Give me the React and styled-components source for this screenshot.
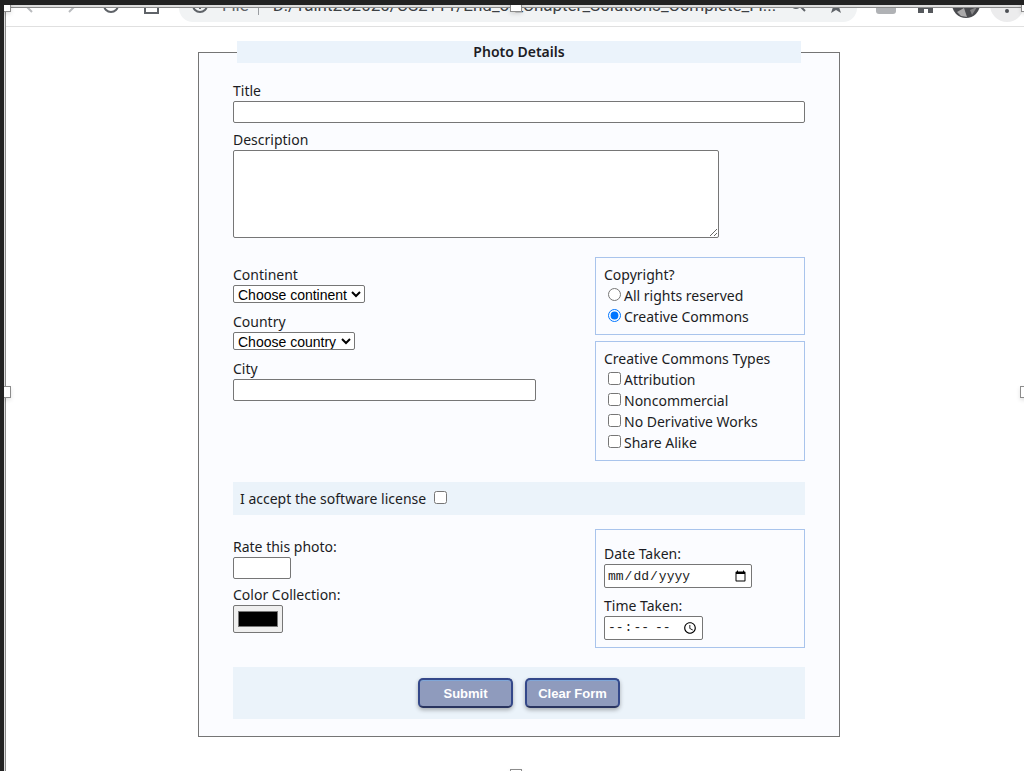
import React from "react";
import styled, { createGlobalStyle } from "styled-components";

const GlobalStyle = createGlobalStyle`
  * { box-sizing: border-box; }
  body {
    margin: 0;
    background: #fff;
    color: #1c1c24;
    font: 14px/20px "Noto Sans", sans-serif;
  }
`;

const Frame = styled.div`
  position: relative;
  min-height: 100vh;
  overflow: hidden;
  border-top: 5px solid #222;
  border-left: 4px solid #222;
`;

const Inner = styled.div`
  min-height: calc(100vh - 5px);
  border-top: 2px solid #ddd;
  border-left: 1px solid #ddd;
`;

const Page = styled.div`
  min-height: calc(100vh - 7px);
  border-top: 1px solid #8a8a8a;
  border-left: 1px solid #8a8a8a;
`;

const handleSpots = {
  topLeft: "top: 0; left: -1px;",
  top: "top: 0; left: calc(50% - 2px);",
  topRight: "top: 0; right: -9px;",
  left: "top: 50%; left: -1px;",
  right: "top: 50%; right: -8px;",
  bottom: "bottom: -10px; left: calc(50% - 2px);",
};

const Handles = styled.div`
  position: absolute;
  inset: -5px 0 0 -4px;
  pointer-events: none;
`;

const Handle = styled.span`
  position: absolute;
  width: 12px;
  height: 12px;
  background: #fff;
  border: 1px solid #8c8c8c;
  box-shadow: 0 2px 4px rgba(0, 0, 0, 0.12);
  ${(p) => handleSpots[p.$spot]}
`;

const Toolbar = styled.div`
  height: 19px;
  overflow: hidden;
  display: flex;
  align-items: flex-end;
  padding: 0 0 4px 16px;
  border-bottom: 1px solid #e0e0e0;
`;

const NavIcons = styled.svg`
  flex: none;
  width: 152px;
  height: 28px;
`;

const AddressBar = styled.div`
  flex: 1;
  min-width: 0;
  height: 28px;
  margin-left: 5px;
  display: flex;
  align-items: center;
  gap: 14px;
  padding: 0 16px 6px 13px;
  border-radius: 0 0 14px 14px;
  background: #f1f3f4;
  color: #5f6368;
  font: 17px/20px Roboto, sans-serif;

  svg { flex: none; }
`;

const Scheme = styled.span`
  padding-right: 9px;
  border-right: 1px solid #9a9da1;
`;

const Address = styled.span`
  flex: 1;
  min-width: 0;
  white-space: nowrap;
  color: #3c4043;
`;

const Extensions = styled.svg`
  flex: none;
  width: 167px;
  height: 28px;
`;

const Main = styled.main`
  padding: 14px 16px 34px 24px;
`;

const PhotoForm = styled.form`
  max-width: 642px;
  margin: 0 auto;
`;

const Details = styled.fieldset`
  margin: 0;
  padding: 18px 34px 17px;
  border: 1px solid #757575;
  background: #fbfcff;
`;

const Legend = styled.legend`
  width: calc(100% - 8px);
  margin: 0 auto;
  padding: 0;
  background: #ebf3fb;
  text-align: center;
  font-weight: 600;
  line-height: 22px;
`;

const Stack = styled.div`
  display: flex;
  flex-direction: column;
  gap: ${(p) => p.$gap}px;
`;

const Field = styled.div`
  display: flex;
  flex-direction: column;
  align-items: flex-start;
`;

const Columns = styled.div`
  display: grid;
  grid-template-columns: minmax(0, 1fr) 210px;
  column-gap: 59px;
`;

const LeftColumn = styled(Stack)`
  padding-top: 8px;
`;

const TextInput = styled.input`
  width: ${(p) => p.$width};
  height: 22px;
  padding: 1px 2px;
  border: 1px solid #767676;
  border-radius: 2px;
  background: #fff;
`;

const TextArea = styled.textarea`
  width: 85%;
  height: 88px;
  border: 1px solid #767676;
  border-radius: 2px;
  background: #fff;
`;

const Select = styled.select`
  width: ${(p) => p.$width}px;
  height: 18px;
  border: 1px solid #767676;
  border-radius: 2px;
  background-color: #fff;
  color: #000;
  font: 14px "Liberation Sans", Arial, sans-serif;
`;

const Picker = styled.input`
  width: ${(p) => p.$width}px;
  height: 24px;
  padding: 1px 2px;
  border: 1px solid #767676;
  border-radius: 2px;
  background: #fff;
  color: #222;
  font: 13px "Liberation Mono", monospace;
`;

const Swatch = styled.input`
  width: 50px;
  height: 28px;
  padding: 1px 2px;
  border: 1px solid #767676;
  border-radius: 2px;
  background: #efefef;
`;

const Panel = styled.div`
  padding: ${(p) => p.$top || 7}px 8px 7px;
  border: 1px solid #a9c4ec;
`;

const Option = styled.label`
  display: flex;
  align-items: center;
  gap: 3px;
  height: 21px;
  padding-left: 4px;

  input {
    width: 13px;
    height: 13px;
    margin: 0 0 2px;
  }
`;

const License = styled.div`
  display: flex;
  align-items: center;
  margin: 21px 0 14px;
  padding: 0 7px;
  height: 33px;
  background: #ebf3fa;

  label {
    display: flex;
    align-items: center;
    gap: 8px;
  }

  input {
    width: 13px;
    height: 13px;
    margin: 0 0 2px;
  }
`;

const Actions = styled.div`
  display: flex;
  justify-content: center;
  gap: 12px;
  margin-top: 19px;
  padding: 11px 0;
  background: #ebf3fa;
`;

const Button = styled.button`
  width: 95px;
  height: 30px;
  padding: 0;
  border: 2px solid #34488a;
  border-bottom-color: #29345f;
  border-radius: 5px;
  background: #8f9bbd;
  box-shadow: inset 0 1px 0 #7fa6d8, 0 2px 4px rgba(0, 0, 0, 0.3);
  color: #fff;
  font: bold 13px "Liberation Sans", Arial, sans-serif;
`;

const licenseTypes = ["Attribution", "Noncommercial", "No Derivative Works", "Share Alike"];

function BrowserBar() {
  return (
    <Toolbar>
      <NavIcons viewBox="0 0 152 28" fill="none" stroke="#5f6368" strokeWidth="2">
        <path d="M10 18 4 12l6-6M47 18l6-6-6-6" stroke="#b9bbbe" />
        <circle cx="89" cy="11" r="7" />
        <path d="M123 9v10h13V9" />
      </NavIcons>
      <AddressBar>
        <svg width="16" height="16" viewBox="0 0 16 16" fill="none" stroke="#5f6368" strokeWidth="2">
          <circle cx="8" cy="8" r="7" />
          <path d="M8 7v5" />
        </svg>
        <Scheme>File</Scheme>
        <Address>D:/Taint202020/CS2111/End_of_Chapter_Solutions_Complete_Fi...</Address>
        <svg width="50" height="20" viewBox="0 0 50 20" fill="none" stroke="#5f6368" strokeWidth="2">
          <circle cx="5" cy="8" r="5" />
          <path d="m9 11 5 5" />
          <path d="m45 2 2 5 5 1-4 4 2 6-5-3-5 3 2-6-4-4 5-1z" fill="#5f6368" stroke="none" />
        </svg>
      </AddressBar>
      <Extensions viewBox="0 0 167 28">
        <rect x="19" y="0" width="20" height="20" rx="3" fill="#b0b2b5" />
        <path d="M61 19v-8h15v8h-5v-4h-4v4z" fill="#55585c" />
        <circle cx="109" cy="10" r="14" fill="#4a4b4f" />
        <path d="m100 18 7-4 3 9-6-1z" fill="#aaa9aa" />
        <path d="m113 16 7-3-5 8z" fill="#858486" />
        <circle cx="150" cy="11" r="17" fill="#ececed" />
        <circle cx="150" cy="17" r="2" fill="#4c4f53" />
      </Extensions>
    </Toolbar>
  );
}

export default function App() {
  return (
    <Frame>
      <GlobalStyle />
      <Inner>
        <Page>
          <BrowserBar />
          <Main>
            <PhotoForm onSubmit={(e) => e.preventDefault()}>
              <Details>
                <Legend>Photo Details</Legend>
                <Stack $gap={19}>
                  <Stack $gap={7}>
                    <Field>
                      <label htmlFor="title">Title</label>
                      <TextInput id="title" type="text" $width="100%" />
                    </Field>
                    <Field>
                      <label htmlFor="description">Description</label>
                      <TextArea id="description" />
                    </Field>
                  </Stack>
                  <Columns>
                    <LeftColumn $gap={9}>
                      <Field>
                        <label htmlFor="continent">Continent</label>
                        <Select id="continent" $width={132}>
                          <option>Choose continent</option>
                        </Select>
                      </Field>
                      <Field>
                        <label htmlFor="country">Country</label>
                        <Select id="country" $width={122}>
                          <option>Choose country</option>
                        </Select>
                      </Field>
                      <Field>
                        <label htmlFor="city">City</label>
                        <TextInput id="city" type="text" $width="100%" />
                      </Field>
                    </LeftColumn>
                    <Stack $gap={6}>
                      <Panel role="radiogroup" aria-labelledby="copyright">
                        <div id="copyright">Copyright?</div>
                        <Option>
                          <input type="radio" name="copyright" />
                          All rights reserved
                        </Option>
                        <Option>
                          <input type="radio" name="copyright" defaultChecked />
                          Creative Commons
                        </Option>
                      </Panel>
                      <Panel role="group" aria-labelledby="types">
                        <div id="types">Creative Commons Types</div>
                        {licenseTypes.map((type) => (
                          <Option key={type}>
                            <input type="checkbox" />
                            {type}
                          </Option>
                        ))}
                      </Panel>
                    </Stack>
                  </Columns>
                </Stack>
                <License>
                  <label>
                    I accept the software license
                    <input type="checkbox" />
                  </label>
                </License>
                <Columns>
                  <LeftColumn $gap={6}>
                    <Field>
                      <label htmlFor="rate">Rate this photo:</label>
                      <TextInput id="rate" type="number" $width="58px" />
                    </Field>
                    <Field>
                      <label htmlFor="color">Color Collection:</label>
                      <Swatch id="color" type="color" defaultValue="#000000" />
                    </Field>
                  </LeftColumn>
                  <Panel $top={14}>
                    <Stack $gap={8}>
                      <Field>
                        <label htmlFor="date">Date Taken:</label>
                        <Picker id="date" type="date" $width={148} />
                      </Field>
                      <Field>
                        <label htmlFor="time">Time Taken:</label>
                        <Picker id="time" type="time" $width={99} />
                      </Field>
                    </Stack>
                  </Panel>
                </Columns>
                <Actions>
                  <Button type="submit">Submit</Button>
                  <Button type="reset">Clear Form</Button>
                </Actions>
              </Details>
            </PhotoForm>
          </Main>
        </Page>
      </Inner>
      <Handles aria-hidden="true">
        {Object.keys(handleSpots).map((spot) => (
          <Handle key={spot} $spot={spot} />
        ))}
      </Handles>
    </Frame>
  );
}
